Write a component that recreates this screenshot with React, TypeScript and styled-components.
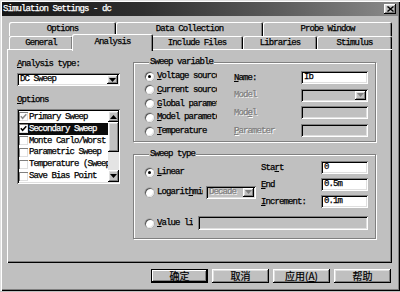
import React from "react";
import styled, { createGlobalStyle, css } from "styled-components";

const mono = css`
  font-family: "Liberation Mono", "DejaVu Sans Mono", monospace;
  font-size: 9px;
  letter-spacing: -0.9px;
  -webkit-text-stroke: 0.25px currentColor;
`;

const GlobalStyle = createGlobalStyle`
  html, body { margin: 0; padding: 0; background: #c0c0c0; }
  #root { width: 400px; height: 292px; overflow: hidden; }
  * { box-sizing: border-box; }
  u { text-decoration: underline; text-underline-offset: 1px; }
`;

const raisedBevel = css`
  box-shadow: inset -1px -1px 0 #000, inset 1px 1px 0 #fff,
    inset -2px -2px 0 #808080, inset 2px 2px 0 #dfdfdf;
`;
const sunkenBevel = css`
  box-shadow: inset 1px 1px 0 #808080, inset -1px -1px 0 #fff,
    inset 2px 2px 0 #000, inset -2px -2px 0 #dfdfdf;
`;

const Window = styled.div`
  ${mono}
  color: #000;
  width: 400px;
  height: 291px;
  background: #c0c0c0;
  padding: 2px;
  box-shadow: inset 1px 1px 0 #dfdfdf, inset 2px 2px 0 #fff,
    inset -1px -1px 0 #000, inset -2px -2px 0 #808080;
  display: flex;
  flex-direction: column;
`;

const TitleBar = styled.div`
  height: 14px;
  display: flex;
  align-items: center;
  justify-content: space-between;
  padding: 0 2px 0 1px;
  background: linear-gradient(to right, #161616 0%, #2e2e2e 35%, #5c5c5c 70%, #8a8a8a 100%);
  color: #fff;
  line-height: 14px;
`;

const CloseButton = styled.div`
  width: 12px;
  height: 10px;
  background: #c0c0c0;
  ${raisedBevel}
  display: flex;
  align-items: center;
  justify-content: center;
`;

const Body = styled.div`
  flex: 1;
  display: flex;
  flex-direction: column;
  padding: 6px 6px 0 5px;
`;

const TabRow = styled.div<{ $h: number }>`
  display: flex;
  height: ${(p) => p.$h}px;
  padding-left: 2px;
`;

const Tab = styled.div<{ $w: number; $active?: boolean }>`
  flex: none;
  width: ${(p) => p.$w}px;
  height: 100%;
  display: flex;
  align-items: center;
  justify-content: center;
  background: #c0c0c0;
  border-top-left-radius: 2px;
  border-top-right-radius: 2px;
  box-shadow: inset 1px 1px 0 #fff, inset -1px 0 0 #000, inset -2px 0 0 #808080;
  white-space: nowrap;
  ${(p) =>
    p.$active &&
    css`
      position: relative;
      z-index: 1;
      width: ${p.$w + 3}px;
      height: calc(100% + 4px);
      margin: -2px -2px 0 -1px;
      padding-bottom: 2px;
    `}
`;

const Panel = styled.div`
  height: 214px;
  box-shadow: inset 1px 1px 0 #fff, inset -1px -1px 0 #000, inset -2px -2px 0 #808080;
  padding: 9px 0 0 10px;
  display: grid;
  grid-template-columns: 103px 243px;
  column-gap: 13px;
  align-items: start;
`;

const LeftCol = styled.div`
  display: flex;
  flex-direction: column;
  padding-top: 1px;
`;

const RightCol = styled.div`
  display: flex;
  flex-direction: column;
  margin-top: -1px;
`;

const FieldLabel = styled.div<{ $mt?: number }>`
  height: 10px;
  line-height: 10px;
  margin-top: ${(p) => p.$mt ?? 0}px;
  white-space: nowrap;
`;

const Combo = styled.div<{ $w?: number; $disabled?: boolean; $mt?: number }>`
  width: ${(p) => (p.$w ? `${p.$w}px` : "100%")};
  height: 13px;
  margin-top: ${(p) => p.$mt ?? 0}px;
  flex: none;
  background: ${(p) => (p.$disabled ? "#c0c0c0" : "#fff")};
  ${sunkenBevel}
  padding: 2px;
  display: flex;
  align-items: stretch;
`;

const ComboText = styled.div<{ $disabled?: boolean }>`
  flex: 1;
  padding-left: 1px;
  line-height: 9px;
  overflow: hidden;
  white-space: nowrap;
  ${(p) =>
    p.$disabled &&
    css`
      color: #808080;
      text-shadow: 1px 1px 0 #fff;
    `}
`;

const ArrowButton = styled.div<{ $h?: number }>`
  width: 11px;
  height: ${(p) => (p.$h ? `${p.$h}px` : "auto")};
  flex: none;
  background: #c0c0c0;
  ${raisedBevel}
  display: flex;
  align-items: center;
  justify-content: center;
`;

const ListBox = styled.div`
  margin-top: 4px;
  height: 75px;
  background: #fff;
  ${sunkenBevel}
  padding: 2px 1px 2px 2px;
  display: flex;
`;

const Items = styled.div`
  flex: 1;
  min-width: 0;
  display: flex;
  flex-direction: column;
`;

const Item = styled.div<{ $selected?: boolean }>`
  height: 12px;
  display: flex;
  align-items: center;
  white-space: nowrap;
  overflow: hidden;
  background: ${(p) => (p.$selected ? "#0c0c0c" : "transparent")};
  color: ${(p) => (p.$selected ? "#fff" : "#000")};
`;

const CheckBox = styled.span`
  width: 9px;
  height: 9px;
  flex: none;
  margin-right: 1px;
  background: #fff;
  box-shadow: inset 1px 1px 0 #808080, inset -1px -1px 0 #dfdfdf;
  display: flex;
  align-items: center;
  justify-content: center;
`;

const ScrollBar = styled.div`
  width: 11px;
  flex: none;
  display: flex;
  flex-direction: column;
`;

const Thumb = styled.div`
  height: 30px;
  background: #c0c0c0;
  ${raisedBevel}
`;

const Track = styled.div`
  flex: 1;
  background: #e4e4e4;
`;

const Group = styled.fieldset<{ $mt?: number; $pad: string }>`
  margin: ${(p) => p.$mt ?? 0}px 0 0 0;
  min-width: 0;
  border: 1px solid #808080;
  box-shadow: inset 1px 1px 0 #fff, 1px 1px 0 #fff;
  padding: ${(p) => p.$pad};
`;

const Legend = styled.legend`
  padding: 0 1px;
  margin-left: 4px;
  height: 10px;
  line-height: 10px;
  background: #c0c0c0;
`;

const VarGrid = styled.div`
  display: grid;
  grid-template-columns: 89px 67px 67px;
`;

const RadioList = styled.div`
  display: flex;
  flex-direction: column;
  gap: 1.75px;
`;

const RadioRow = styled.div<{ $h?: number }>`
  height: ${(p) => p.$h ?? 12}px;
  display: flex;
  align-items: center;
  gap: 3px;
  white-space: nowrap;
`;

const Radio = styled.span<{ $on?: boolean }>`
  width: 9px;
  height: 9px;
  flex: none;
  border-radius: 50%;
  background: #fff;
  box-shadow: inset 1px 1px 0 #5a5a5a, inset -1px -1px 0 #e8e8e8, 0 0 0 0.5px #9a9a9a;
  display: flex;
  align-items: center;
  justify-content: center;
  &::after {
    content: "";
    width: 3px;
    height: 3px;
    border-radius: 50%;
    background: ${(p) => (p.$on ? "#000" : "transparent")};
  }
`;

const Clip = styled.span<{ $w: number }>`
  width: ${(p) => p.$w}px;
  overflow: hidden;
  white-space: nowrap;
  flex: none;
`;

const FormGrid = styled.div<{ $rowGap: number; $mt?: number; $cols: string }>`
  grid-column: span 2;
  display: grid;
  grid-template-columns: ${(p) => p.$cols};
  grid-auto-rows: 13px;
  row-gap: ${(p) => p.$rowGap}px;
  margin-top: ${(p) => p.$mt ?? 0}px;
  align-items: center;
`;

const DimLabel = styled.span<{ $disabled?: boolean }>`
  white-space: nowrap;
  ${(p) =>
    p.$disabled &&
    css`
      color: #808080;
      text-shadow: 1px 1px 0 #fff;
    `}
`;

const TextBox = styled.div<{ $disabled?: boolean; $w?: number; $h?: number; $ml?: number }>`
  width: ${(p) => (p.$w ? `${p.$w}px` : "100%")};
  height: ${(p) => p.$h ?? 13}px;
  margin-left: ${(p) => p.$ml ?? 0}px;
  background: ${(p) => (p.$disabled ? "#c0c0c0" : "#fff")};
  ${sunkenBevel}
  padding: 0 3px;
  line-height: ${(p) => p.$h ?? 13}px;
  white-space: nowrap;
`;

const TypeTop = styled.div`
  display: flex;
`;

const TypeLeft = styled.div`
  width: 116px;
  display: flex;
  flex-direction: column;
  gap: 8px;
  padding-top: 5px;
`;

const ValueRow = styled.div`
  margin-top: 8px;
  display: flex;
  align-items: center;
  gap: 3px;
`;

const ButtonRow = styled.div`
  display: flex;
  justify-content: flex-end;
  gap: 4px;
  margin-top: 6px;
  padding-right: 1px;
`;

const PushButton = styled.div<{ $default?: boolean }>`
  width: 57px;
  height: 14px;
  display: flex;
  align-items: center;
  justify-content: center;
  font-family: "Noto Sans CJK SC", "Noto Sans", sans-serif;
  font-size: 10px;
  letter-spacing: 0;
  line-height: 1;
  -webkit-text-stroke: 0.2px #000;
  background: #c0c0c0;
  ${(p) =>
    p.$default
      ? css`
          box-shadow: inset 0 0 0 1px #000, inset -2px -2px 0 #000, inset 2px 2px 0 #fff,
            inset -3px -3px 0 #808080;
        `
      : raisedBevel}
`;

const Arrow = ({ down = true, color = "#000" }: { down?: boolean; color?: string }) => (
  <svg width="7" height="4" viewBox="0 0 7 4">
    <polygon points={down ? "0,0 7,0 3.5,4" : "0,4 7,4 3.5,0"} fill={color} />
  </svg>
);

const Check = ({ color = "#000" }: { color?: string }) => (
  <svg width="7" height="7" viewBox="0 0 7 7">
    <polyline points="0.8,3.3 2.6,5.3 6.3,1.2" fill="none" stroke={color} strokeWidth="1.5" />
  </svg>
);

const CloseX = () => (
  <svg width="7" height="6" viewBox="0 0 7 6">
    <path d="M0.5 0.5 L6.5 5.5 M6.5 0.5 L0.5 5.5" stroke="#000" strokeWidth="1.4" />
  </svg>
);

const listItems = [
  { label: "Primary Sweep", checked: true, dim: true },
  { label: "Secondary Sweep", checked: true, selected: true },
  { label: "Monte Carlo/Worst Case" },
  { label: "Parametric Sweep" },
  { label: "Temperature (Sweep)" },
  { label: "Save Bias Point" },
];

export default function App() {
  return (
    <>
      <GlobalStyle />
      <Window>
        <TitleBar>
          <span>Simulation Settings - dc</span>
          <CloseButton>
            <CloseX />
          </CloseButton>
        </TitleBar>
        <Body>
          <TabRow $h={14}>
            <Tab $w={107}>Options</Tab>
            <Tab $w={147}>Data Collection</Tab>
            <Tab $w={129}>Probe Window</Tab>
          </TabRow>
          <TabRow $h={13}>
            <Tab $w={64}>General</Tab>
            <Tab $w={78} $active>
              Analysis
            </Tab>
            <Tab $w={92}>Include Files</Tab>
            <Tab $w={74}>Libraries</Tab>
            <Tab $w={75}>Stimulus</Tab>
          </TabRow>
          <Panel>
            <LeftCol>
              <FieldLabel>
                <u>A</u>nalysis type:
              </FieldLabel>
              <Combo $mt={4}>
                <ComboText>DC Sweep</ComboText>
                <ArrowButton>
                  <Arrow />
                </ArrowButton>
              </Combo>
              <FieldLabel $mt={9}>
                <u>O</u>ptions
              </FieldLabel>
              <ListBox>
                <Items>
                  {listItems.map((it) => (
                    <Item key={it.label} $selected={it.selected}>
                      <CheckBox>{it.checked && <Check color={it.dim ? "#8a8a8a" : "#000"} />}</CheckBox>
                      {it.label}
                    </Item>
                  ))}
                </Items>
                <ScrollBar>
                  <ArrowButton $h={11}>
                    <Arrow down={false} />
                  </ArrowButton>
                  <Thumb />
                  <Track />
                  <ArrowButton $h={12}>
                    <Arrow />
                  </ArrowButton>
                </ScrollBar>
              </ListBox>
            </LeftCol>
            <RightCol>
              <Group $pad="3px 7px 4px 11px">
                <Legend>Sweep variable</Legend>
                <VarGrid>
                  <RadioList>
                    <RadioRow>
                      <Radio $on />
                      <Clip $w={60}>
                        <u>V</u>oltage source
                      </Clip>
                    </RadioRow>
                    <RadioRow>
                      <Radio />
                      <Clip $w={60}>
                        <u>C</u>urrent source
                      </Clip>
                    </RadioRow>
                    <RadioRow>
                      <Radio />
                      <Clip $w={60}>
                        <u>G</u>lobal parameter
                      </Clip>
                    </RadioRow>
                    <RadioRow>
                      <Radio />
                      <Clip $w={60}>
                        <u>M</u>odel parameter
                      </Clip>
                    </RadioRow>
                    <RadioRow>
                      <Radio />
                      <Clip $w={60}>
                        <u>T</u>emperature
                      </Clip>
                    </RadioRow>
                  </RadioList>
                  <FormGrid $cols="67px 67px" $rowGap={4.7} $mt={1}>
                    <DimLabel>
                      <u>N</u>ame:
                    </DimLabel>
                    <TextBox>Ib</TextBox>
                    <DimLabel $disabled>Model</DimLabel>
                    <Combo $disabled>
                      <ComboText $disabled />
                      <ArrowButton>
                        <Arrow color="#808080" />
                      </ArrowButton>
                    </Combo>
                    <DimLabel $disabled>
                      Mod<u>e</u>l
                    </DimLabel>
                    <TextBox $disabled />
                    <DimLabel $disabled>
                      <u>P</u>arameter
                    </DimLabel>
                    <TextBox $disabled />
                  </FormGrid>
                </VarGrid>
              </Group>
              <Group $mt={7} $pad="2px 7px 8px 11px">
                <Legend>Sweep type</Legend>
                <TypeTop>
                  <TypeLeft>
                    <RadioRow>
                      <Radio $on />
                      <span>
                        <u>L</u>inear
                      </span>
                    </RadioRow>
                    <RadioRow>
                      <Radio />
                      <Clip $w={46}>
                        Logarit<u>h</u>mic
                      </Clip>
                      <Combo $w={50} $disabled>
                        <ComboText $disabled>Decade</ComboText>
                        <ArrowButton>
                          <Arrow color="#808080" />
                        </ArrowButton>
                      </Combo>
                    </RadioRow>
                  </TypeLeft>
                  <FormGrid $cols="60px 47px" $rowGap={4}>
                    <DimLabel>
                      Sta<u>r</u>t
                    </DimLabel>
                    <TextBox>0</TextBox>
                    <DimLabel>
                      <u>E</u>nd
                    </DimLabel>
                    <TextBox>0.5m</TextBox>
                    <DimLabel>
                      <u>I</u>ncrement:
                    </DimLabel>
                    <TextBox>0.1m</TextBox>
                  </FormGrid>
                </TypeTop>
                <ValueRow>
                  <Radio />
                  <Clip $w={36}>
                    <u>V</u>alue list
                  </Clip>
                  <TextBox $disabled $w={170} $h={14} $ml={2} />
                </ValueRow>
              </Group>
            </RightCol>
          </Panel>
          <ButtonRow>
            <PushButton $default>确定</PushButton>
            <PushButton>取消</PushButton>
            <PushButton>
              应用(<u>A</u>)
            </PushButton>
            <PushButton>帮助</PushButton>
          </ButtonRow>
        </Body>
      </Window>
    </>
  );
}
